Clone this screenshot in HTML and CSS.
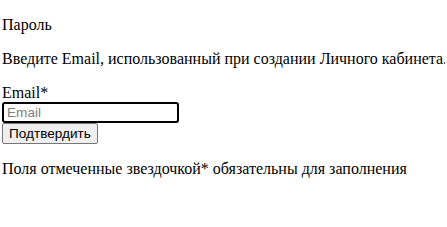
FILE: index.html
```html
<!DOCTYPE html>
<html lang="ru">
<head>
<meta charset="utf-8">
<title>Пароль</title>
<link rel="stylesheet" href="styles.css">
</head>
<body>
<p class="title">Пароль</p>
<p class="hint">Введите Email, использованный при создании Личного кабинета.</p>
<form class="form">
  <label class="label" for="email">Email*</label>
  <input class="input" id="email" type="text" placeholder="Email">
  <button class="button" type="button">Подтвердить</button>
</form>
<p class="note">Поля отмеченные звездочкой* обязательны для заполнения</p>
</body>
</html>
```
FILE: styles.css
```css
html, body {
  background: #fff;
}
body {
  margin: 0 2px;
  font-family: "Liberation Serif", "Times New Roman", serif;
  font-size: 16px;
  color: #000;
  overflow: hidden;
}
.title, .hint, .note {
  margin: 16px 0;
  line-height: 18px;
}
.hint {
  white-space: nowrap;
}
.form {
  display: flex;
  flex-direction: column;
  align-items: flex-start;
}
.label {
  line-height: 18px;
}
.input {
  box-sizing: border-box;
  width: 177px;
  height: 21px;
  margin: 0;
  padding: 1px 3px;
  border: 2px solid #000;
  border-radius: 3px;
  font-family: "Liberation Sans", Arial, sans-serif;
  font-size: 13.6px;
  outline: none;
}
.input::placeholder {
  color: #808080;
}
.button {
  box-sizing: border-box;
  height: 21px;
  margin: 0;
  padding: 1px 6px;
  background: #efefef;
  border: 1px solid #767676;
  border-radius: 2px;
  font-family: "Liberation Sans", Arial, sans-serif;
  font-size: 13.6px;
  color: #000;
}
```
